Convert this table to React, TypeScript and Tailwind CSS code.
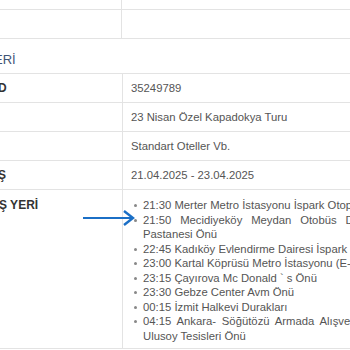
const stops = [
  { time: '21:30', place: 'Merter Metro İstasyonu İspark Otoparkı Önü' },
  { time: '21:50', place: 'Mecidiyeköy Meydan Otobüs Durakları Divan Pastanesi Önü' },
  { time: '22:45', place: 'Kadıköy Evlendirme Dairesi İspark Otoparkı' },
  { time: '23:00', place: 'Kartal Köprüsü Metro İstasyonu (E-5 Yanı)' },
  { time: '23:15', place: 'Çayırova Mc Donald ` s Önü' },
  { time: '23:30', place: 'Gebze Center Avm Önü' },
  { time: '00:15', place: 'İzmit Halkevi Durakları' },
  { time: '04:15', place: 'Ankara- Söğütözü Armada Alışveriş Merkezi Altı Ulusoy Tesisleri Önü' },
];

const rows = [
  { label: 'D', value: '35249789' },
  { label: '', value: '23 Nisan Özel Kapadokya Turu' },
  { label: '', value: 'Standart Oteller Vb.' },
  { label: 'Ş', value: '21.04.2025 - 23.04.2025' },
];

function Arrow() {
  return (
    <svg width="54" height="18" viewBox="0 0 54 18" className="absolute left-[82px] top-[209px]">
      <path d="M1 9 H50" stroke="#1b6fc6" strokeWidth="2.2" fill="none" />
      <path d="M42 2 L51 9 L42 16" stroke="#1b6fc6" strokeWidth="2.4" fill="none" strokeLinejoin="miter" />
    </svg>
  );
}

export default function App() {
  return (
    <div className="relative w-[350px] h-[350px] overflow-hidden bg-white font-['Liberation_Sans',Arial,sans-serif] text-[11.3px] text-[#555]">
      {/* tail of the table above */}
      <div className="flex h-[10px] border-b border-[#e3e3e3]">
        <div className="w-[122px] shrink-0 border-r border-[#e3e3e3]" />
        <div className="flex-1" />
      </div>
      <div className="flex h-[29px] border-b border-[#e3e3e3]">
        <div className="w-[122px] shrink-0 border-r border-[#e3e3e3]" />
        <div className="flex-1" />
      </div>

      {/* section header */}
      <div className="flex h-[35px] items-end pb-[4px] border-b border-[#e3e3e3]">
        <span className="-ml-[6px] text-[13px] text-[#3e5476]">ERİ</span>
      </div>

      {rows.map((row, i) => (
        <div key={i} className="flex h-[29px] border-b border-[#e3e3e3]">
          <div className="w-[122px] shrink-0 flex items-center text-[12px] font-bold text-[#333]">
            <span className="-ml-[2px]">{row.label}</span>
          </div>
          <div className="flex-1 flex items-center border-l border-[#e3e3e3] pl-[8px] whitespace-nowrap">
            {row.value}
          </div>
        </div>
      ))}

      <div className="flex border-b border-[#e3e3e3]">
        <div className="w-[122px] shrink-0 pt-[8px] text-[12px] font-bold text-[#333] leading-[14.5px]">
          <span className="-ml-[1px]">Ş YERİ</span>
        </div>
        <div className="border-l border-[#e3e3e3] pl-[8px] pt-[8px] pb-[5px]">
          <ul className="w-[300px] leading-[14.5px]">
            {stops.map((s) => (
              <li key={s.time} className="flex">
                <span className="w-[12px] shrink-0 pl-[3px] pt-[6px]">
                  <span className="block w-[3px] h-[3px] rounded-full bg-[#888]" />
                </span>
                <span className="w-[286px] text-justify">
                  {s.time} {s.place}
                </span>
              </li>
            ))}
          </ul>
        </div>
      </div>

      <Arrow />
    </div>
  );
}
